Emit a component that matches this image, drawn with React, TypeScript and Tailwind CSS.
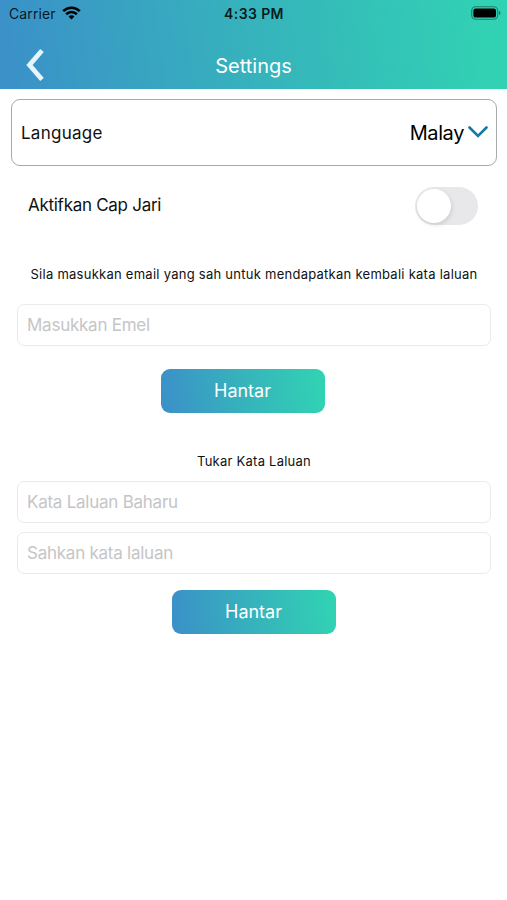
import React from "react";

const gradient = "bg-[linear-gradient(82deg,#3b91c8_2%,#36b3bc_50%,#31d2b3_97%)]";

function StatusBar() {
  return (
    <div className="grid h-7 grid-cols-3 items-center pl-[9px] pr-[6px] text-black/85">
      <div className="flex items-center gap-[6px]">
        <span className="text-[14px] leading-7 tracking-[0.1px]">Carrier</span>
        <svg className="-mt-[2px] text-black" width="19" height="14" viewBox="0 0 19 14" fill="none" stroke="currentColor" strokeWidth="2.6">
          <path d="M1.200 5.200C5.900.5 13.100.5 17.800 5.200" />
          <path d="M4.200 8.200c3-2.900 7.600-2.900 10.600 0" />
          <path d="M9.500 13.400 6.600 10.400c1.600-1.500 4.200-1.500 5.800 0Z" fill="currentColor" stroke="none" />
        </svg>
      </div>
      <span className="-ml-[2px] text-center text-[14px] font-semibold leading-7 tracking-[0.4px]">4:33 PM</span>
      <svg className="-mt-[2px] justify-self-end" width="30" height="14" viewBox="0 0 30 14">
        <rect x="0.7" y="0.7" width="26" height="12.6" rx="4" fill="none" stroke="#000" strokeOpacity="0.4" strokeWidth="1.1" />
        <rect x="2.4" y="2.400" width="22.600" height="9.200" rx="2.200" />
        <path d="M28 5v4c1.900-.7 1.900-3.300 0-4Z" fillOpacity="0.45" />
      </svg>
    </div>
  );
}

function Field({ label, placeholder }: { label: string; placeholder: string }) {
  return (
    <input
      aria-label={label}
      placeholder={placeholder}
      className="block h-[42px] w-full rounded-[7px] border border-[#ebebeb] bg-white px-[9px] text-[17px] tracking-[-0.25px] outline-none placeholder:text-[#c5c5c7]"
    />
  );
}

function SubmitButton() {
  return (
    <button className={`block h-[44px] w-[164px] rounded-[9px] pb-[2px] pr-[1px] text-[18px] text-white ${gradient}`}>
      Hantar
    </button>
  );
}

export default function App() {
  return (
    <div className="h-[900px] w-[507px] overflow-hidden bg-white font-['Inter','Liberation_Sans',sans-serif] text-[#111]">
      <header className={`h-[89px] ${gradient}`}>
        <StatusBar />
        <div className="grid h-[61px] grid-cols-3 items-center pt-[13px]">
          <button aria-label="Back" className="ml-[25px] w-5">
            <svg width="20" height="34" viewBox="0 0 20 34" fill="none" stroke="#e4f5fd" strokeWidth="4.8">
              <path d="M17 2.500 4.500 17 17 31.500" />
            </svg>
          </button>
          <h1 className="pt-[2px] text-center text-[20px] leading-6 text-white">Settings</h1>
        </div>
      </header>

      <main>
        <section className="ml-[11px] mt-[10px] flex h-[67px] w-[486px] items-center justify-between rounded-[9px] border border-[#a9a9a9] pl-[9px] pr-[8px]">
          <span className="pt-[3px] text-[17px] tracking-[0.25px]">Language</span>
          <button className="flex items-center gap-[4px] text-[20px] tracking-[-0.4px] text-black">
            Malay
            <svg className="-mt-[2px]" width="20" height="12" viewBox="0 0 20 12" fill="none" stroke="#137aa5" strokeWidth="2.6" strokeLinecap="round">
              <path d="m1.500 1.500 8.500 8.500 8.500-8.500" />
            </svg>
          </button>
        </section>

        <section className="mt-[20px] flex h-[39px] items-center justify-between pl-[28px] pr-[29px]">
          <span className="text-[17px] tracking-[-0.28px]">Aktifkan Cap Jari</span>
          <button role="switch" aria-checked="false" aria-label="Aktifkan Cap Jari" className="flex h-[38px] w-[63px] items-center rounded-full bg-[#e8e8ea] pl-[2px]">
            <span className="h-[34px] w-[34px] rounded-full bg-white shadow-[1px_2px_4px_rgba(0,0,0,0.12)]" />
          </button>
        </section>

        <section className="mt-[39px] pl-[17px] pr-[16px]">
          <p className="text-center text-[13px] leading-5 tracking-[0.26px]">Sila masukkan email yang sah untuk mendapatkan kembali kata laluan</p>
          <div className="mt-[20px]">
            <Field label="Emel" placeholder="Masukkan Emel" />
          </div>
          <div className="ml-[144px] mt-[23px]">
            <SubmitButton />
          </div>
        </section>

        <section className="mt-[38px] pl-[17px] pr-[16px]">
          <h2 className="text-center text-[13px] leading-5 tracking-[0.24px]">Tukar Kata Laluan</h2>
          <div className="mt-[10px] flex flex-col gap-[9px]">
            <Field label="Kata Laluan Baharu" placeholder="Kata Laluan Baharu" />
            <Field label="Sahkan kata laluan" placeholder="Sahkan kata laluan" />
          </div>
          <div className="ml-[155px] mt-[16px]">
            <SubmitButton />
          </div>
        </section>
      </main>
    </div>
  );
}
